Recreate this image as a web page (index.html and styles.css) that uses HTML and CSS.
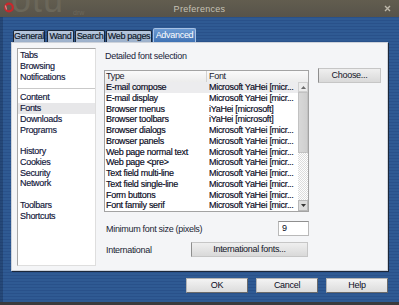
FILE: index.html
```html
<!DOCTYPE html>
<html>
<head>
<meta charset="utf-8">
<title>Preferences</title>
<link rel="stylesheet" href="styles.css">
</head>
<body>
<div class="window">
  <div class="titlebar">
    <span class="bg-logo">otu</span>
    <span class="bg-sub">drw</span>
    <svg class="app-icon" width="12" height="11" viewBox="0 0 12 11">
      <circle cx="6" cy="5.5" r="3.8" fill="none" stroke="#c9272c" stroke-width="2.2"/>
      <path d="M2.4 3.5 L3.6 7.5" stroke="#d98a8c" stroke-width="1.2"/>
    </svg>
    <span class="title">Preferences</span>
    <svg class="close" width="7" height="7" viewBox="0 0 7 7">
      <path d="M1 1 L6 6 M6 1 L1 6" stroke="#bdb8aa" stroke-width="1.4"/>
    </svg>
  </div>

  <div class="tabs">
    <div class="tab tab-general">General</div>
    <div class="tab tab-wand">Wand</div>
    <div class="tab tab-search">Search</div>
    <div class="tab tab-web">Web pages</div>
    <div class="tab tab-active">Advanced</div>
  </div>

  <div class="panel">
    <div class="sidebar">
      <div class="group">
        <div class="nav-item">Tabs</div>
        <div class="nav-item">Browsing</div>
        <div class="nav-item">Notifications</div>
      </div>
      <div class="sep"></div>
      <div class="group">
        <div class="nav-item">Content</div>
        <div class="nav-item nav-selected">Fonts</div>
        <div class="nav-item">Downloads</div>
        <div class="nav-item">Programs</div>
      </div>
      <div class="group group-gap">
        <div class="nav-item">History</div>
        <div class="nav-item">Cookies</div>
        <div class="nav-item">Security</div>
        <div class="nav-item">Network</div>
      </div>
      <div class="group group-gap">
        <div class="nav-item">Toolbars</div>
        <div class="nav-item">Shortcuts</div>
      </div>
    </div>

    <div class="content">
      <div class="caption">Detailed font selection</div>
      <div class="font-row">
        <div class="table">
          <div class="thead">
            <div class="th th-type">Type</div>
            <div class="th th-font">Font</div>
          </div>
          <div class="tbody">
            <div class="rows">
              <div class="tr tr-selected"><span class="td-type">E-mail compose</span><span class="td-font">Microsoft YaHei [micr...</span></div>
              <div class="tr"><span class="td-type">E-mail display</span><span class="td-font">Microsoft YaHei [micr...</span></div>
              <div class="tr"><span class="td-type">Browser menus</span><span class="td-font">iYaHei [microsoft]</span></div>
              <div class="tr"><span class="td-type">Browser toolbars</span><span class="td-font">iYaHei [microsoft]</span></div>
              <div class="tr"><span class="td-type">Browser dialogs</span><span class="td-font">Microsoft YaHei [micr...</span></div>
              <div class="tr"><span class="td-type">Browser panels</span><span class="td-font">Microsoft YaHei [micr...</span></div>
              <div class="tr"><span class="td-type">Web page normal text</span><span class="td-font">Microsoft YaHei [micr...</span></div>
              <div class="tr"><span class="td-type">Web page &lt;pre&gt;</span><span class="td-font">Microsoft YaHei [micr...</span></div>
              <div class="tr"><span class="td-type">Text field multi-line</span><span class="td-font">Microsoft YaHei [micr...</span></div>
              <div class="tr"><span class="td-type">Text field single-line</span><span class="td-font">Microsoft YaHei [micr...</span></div>
              <div class="tr"><span class="td-type">Form buttons</span><span class="td-font">Microsoft YaHei [micr...</span></div>
              <div class="tr"><span class="td-type">Font family serif</span><span class="td-font">Microsoft YaHei [micr...</span></div>
            </div>
            <div class="scrollbar">
              <div class="sb-btn">
                <svg width="5" height="3" viewBox="0 0 5 3"><path d="M0 3 L2.5 0 L5 3 Z" fill="#6b6b6b"/></svg>
              </div>
              <div class="sb-thumb"></div>
              <div class="sb-track"></div>
              <div class="sb-btn sb-btn-down">
                <svg width="5" height="3" viewBox="0 0 5 3"><path d="M0 0 L5 0 L2.5 3 Z" fill="#333"/></svg>
              </div>
            </div>
          </div>
        </div>
        <div class="btn btn-choose">Choose...</div>
      </div>

      <div class="min-row">
        <span class="field-label">Minimum font size (pixels)</span>
        <div class="input">9</div>
      </div>

      <div class="intl-row">
        <span class="field-label">International</span>
        <div class="btn btn-intl">International fonts...</div>
      </div>
    </div>
  </div>

  <div class="buttons">
    <div class="btn btn-dlg">OK</div>
    <div class="btn btn-dlg">Cancel</div>
    <div class="btn btn-dlg">Help</div>
  </div>

  <div class="taskbar"></div>
</div>
</body>
</html>
```

FILE: styles.css
```css
html, body {
  margin: 0;
  padding: 0;
}

body {
  width: 399px;
  height: 305px;
  overflow: hidden;
  font-family: "Liberation Sans", Arial, sans-serif;
  font-size: 9px;
  letter-spacing: -0.3px;
  color: #080a1c;
  -webkit-text-stroke: 0.15px currentColor;
  background:
    linear-gradient(to right, rgba(10, 20, 40, 0.25) 0 3px, transparent 3px),
    repeating-linear-gradient(to bottom, #2f5a93 0 2px, #29518a 2px 3px);
}

.window {
  display: flex;
  flex-direction: column;
  height: 305px;
}

/* ---------- title bar ---------- */
.titlebar {
  position: relative;
  flex: none;
  height: 17px;
  display: grid;
  grid-template-columns: 1fr auto 1fr;
  align-items: center;
  overflow: hidden;
  background: linear-gradient(#625d4f, #57534a);
  -webkit-text-stroke: 0;
}

.bg-logo {
  position: absolute;
  left: 11px;
  top: -18px;
  font-size: 36px;
  line-height: 36px;
  letter-spacing: 1px;
  color: #6b675a;
}

.bg-sub {
  position: absolute;
  left: 73px;
  top: 9px;
  font-size: 7px;
  line-height: 8px;
  letter-spacing: 0;
  color: #6c685c;
}

.app-icon {
  position: absolute;
  left: 3px;
  top: 2px;
}

.title {
  grid-column: 2;
  font-size: 9px;
  letter-spacing: 0.3px;
  color: #c6c2b5;
}

.close {
  grid-column: 3;
  justify-self: end;
  margin-right: 8px;
}

/* ---------- tabs ---------- */
.tabs {
  display: flex;
  align-items: flex-end;
  height: 14px;
  margin: 11px 0 0 13px;
}

.tab {
  box-sizing: border-box;
  height: 12px;
  line-height: 11px;
  text-align: center;
  white-space: nowrap;
  color: #0a1526;
  background: linear-gradient(#b7c7dc, #9cb0ca);
  border: 1px solid #1a2739;
  border-bottom: none;
  border-radius: 2px 2px 0 0;
}

.tab-general { width: 32px; margin-right: 2px; }
.tab-wand { width: 27px; margin-right: 1px; }
.tab-search { width: 30px; margin-right: 1px; }
.tab-web { width: 46px; margin-right: 1px; }

.tab-active {
  width: 43px;
  height: 14px;
  line-height: 12px;
  color: #ffffff;
  -webkit-text-stroke: 0;
  background: linear-gradient(#6d9bd3, #3f72b4);
  border: 1px solid #a8c2e4;
  border-bottom: none;
}

/* ---------- panel ---------- */
.panel {
  box-sizing: border-box;
  display: flex;
  width: 377px;
  height: 229px;
  margin-left: 11px;
  padding: 5px 6px 0 5px;
  background: #f4f5f7;
  border: 1px solid #cdd2da;
  box-shadow: 1px 1px 0 #1b273a;
}

.sidebar {
  box-sizing: border-box;
  width: 79px;
  height: 218px;
  padding-top: 1px;
  background: #ffffff;
  border: 1px solid #a6a6a6;
  border-right-color: #dedede;
  border-bottom-color: #dedede;
}

.nav-item {
  height: 10.75px;
  line-height: 10.75px;
  padding-left: 2px;
  white-space: nowrap;
  color: #12163a;
}

.nav-selected {
  background: #e7e7e9;
}

.group-gap {
  margin-top: 10.75px;
}

.sep {
  height: 1px;
  margin: 5.5px 0 3.6px;
  background: #c9c9c9;
}

.content {
  display: flex;
  flex-direction: column;
  width: 277px;
  margin-left: 8px;
}

.caption {
  margin: 2px 0 8px 1px;
  line-height: 12px;
  color: #20233a;
  -webkit-text-stroke: 0;
}

.font-row {
  display: flex;
  align-items: flex-start;
}

/* ---------- table ---------- */
.table {
  box-sizing: border-box;
  width: 205px;
  height: 142px;
  background: #ffffff;
  border: 1px solid #a3a3a3;
  display: flex;
  flex-direction: column;
}

.thead {
  display: flex;
  height: 11px;
  flex: none;
  background: linear-gradient(#fafafa, #ececec);
}

.th {
  line-height: 11px;
  color: #1a1a2e;
  white-space: nowrap;
  -webkit-text-stroke: 0;
}

.th-type {
  width: 100px;
  padding-left: 1px;
  border-right: 1px solid #d2d2d2;
}

.th-font {
  flex: 1;
  padding-left: 2px;
}

.tbody {
  display: flex;
  flex: 1;
}

.rows {
  width: 193px;
}

.tr {
  display: flex;
  height: 10.75px;
  line-height: 10.75px;
  white-space: nowrap;
  color: #05061a;
}

.tr-selected {
  background: #ececee;
}

.td-type {
  width: 100px;
  padding-left: 1px;
  overflow: hidden;
}

.td-font {
  flex: 1;
  padding-left: 3px;
  overflow: hidden;
}

.scrollbar {
  display: flex;
  flex-direction: column;
  width: 10px;
  background: #f0f0f0;
}

.sb-btn {
  box-sizing: border-box;
  height: 10px;
  flex: none;
  display: flex;
  align-items: center;
  justify-content: center;
  background: #ececec;
  border: 1px solid #d0d0d0;
}

.sb-btn-down {
  height: 11px;
  background: #dcdcdc;
  border-color: #b8b8b8;
}

.sb-thumb {
  box-sizing: border-box;
  height: 61px;
  flex: none;
  background: linear-gradient(to right, #d8d8d8, #cfcfcf);
  border: 1px solid #c2c2c2;
}

.sb-track {
  flex: 1;
  background: repeating-conic-gradient(#dcdcdc 0 25%, #ffffff 0 50%) 0 0 / 2px 2px;
}

/* ---------- buttons & fields ---------- */
.btn {
  box-sizing: border-box;
  height: 15px;
  line-height: 13px;
  text-align: center;
  color: #141629;
  background: linear-gradient(#efefef, #d9d9d9);
  border: 1px solid #c6c6c6;
  border-left-color: #8e8e8e;
  white-space: nowrap;
  -webkit-text-stroke: 0;
}

.btn-choose {
  width: 63px;
  margin: -2px 0 0 9px;
}

.min-row {
  display: flex;
  align-items: center;
  justify-content: space-between;
  width: 205px;
  margin-top: 9px;
}

.field-label {
  padding-left: 2px;
  color: #1a1d33;
  -webkit-text-stroke: 0;
}

.input {
  box-sizing: border-box;
  width: 31px;
  height: 15px;
  line-height: 13px;
  padding-left: 3px;
  background: #ffffff;
  border: 1px solid #b9b9b9;
  border-top-color: #8f8f8f;
  -webkit-text-stroke: 0;
}

.intl-row {
  display: flex;
  align-items: center;
  justify-content: space-between;
  width: 204px;
  margin-top: 6px;
}

.btn-intl {
  width: 117px;
}

.buttons {
  display: flex;
  justify-content: flex-end;
  gap: 8px;
  margin-top: 7px;
  padding-right: 11px;
}

.btn-dlg {
  width: 62px;
  color: #0a0c1e;
  background: linear-gradient(#f3f3f3, #dcdcdc);
  border: 1px solid #b4b4b4;
  border-right-color: #6a6a6a;
  border-bottom-color: #6a6a6a;
}

.taskbar {
  margin-top: auto;
  height: 3px;
  background: #3a3b3e;
}
```
